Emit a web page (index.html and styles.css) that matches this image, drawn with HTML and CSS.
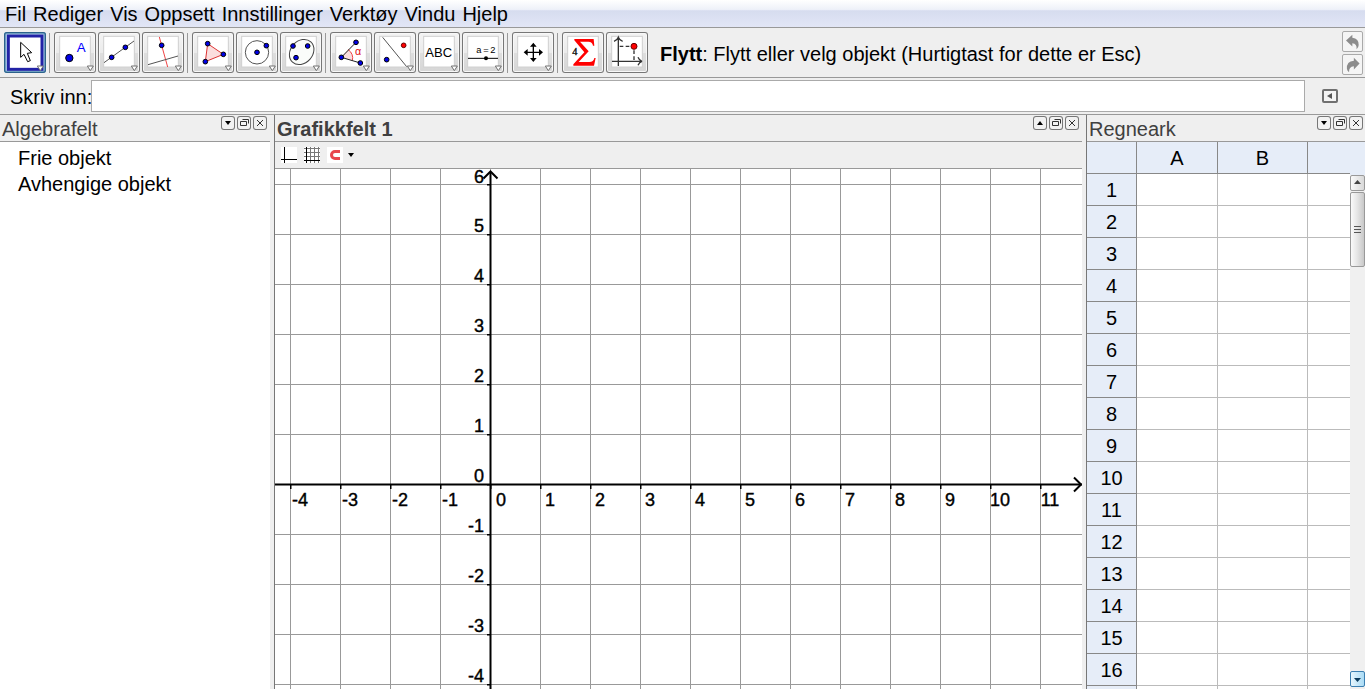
FILE: index.html
```html
<!DOCTYPE html>
<html lang="nn">
<head>
<meta charset="utf-8">
<title>GeoGebra</title>
<link rel="stylesheet" href="styles.css">
</head>
<body>
<svg class="defs" aria-hidden="true">
  <symbol id="tile" viewBox="0 0 126 123">
    <rect x="17" y="13" width="92" height="92" fill="#fff" stroke="#d0d0d0" stroke-width="3"/>
  </symbol>
  <symbol id="more" viewBox="0 0 126 123">
    <path d="M100 102h18l-9 14z" fill="#fff" stroke="#707070" stroke-width="3"/>
  </symbol>
  <symbol id="down" viewBox="0 0 14 14"><path d="M4 5h6L7 9z" fill="#000"/></symbol>
  <symbol id="up" viewBox="0 0 14 14"><path d="M4 9h6L7 5z" fill="#000"/></symbol>
  <symbol id="window" viewBox="0 0 14 14"><path d="M3.500 5.500h6v4h-6zM5.500 3.500h6v4" fill="none" stroke="#333"/></symbol>
  <symbol id="close" viewBox="0 0 14 14"><path d="M4 4l6 6M10 4l-6 6" fill="none" stroke="#333"/></symbol>
</svg>

<nav class="menu" aria-label="Meny">
  <button>Fil</button><button>Rediger</button><button>Vis</button><button>Oppsett</button><button>Innstillinger</button><button>Verktøy</button><button>Vindu</button><button>Hjelp</button>
</nav>

<div class="toolbar">
  <button class="tool selected" aria-label="Flytt" aria-pressed="true"><svg viewBox="0 0 126 123">
    <rect x="13" y="12" width="101" height="100" fill="#fff" stroke="#2222a6" stroke-width="9"/>
    <path d="M50 31v45l10-9 11 22 8-3-9-22 13-2z" fill="#fff" stroke="#000" stroke-width="3"/>
    <use href="#more"/></svg></button>
  <span class="sep"></span>
  <button class="tool" aria-label="Nytt punkt"><svg viewBox="0 0 126 123"><use href="#tile"/>
    <circle class="pt" cx="46" cy="78" r="11"/><text x="68" y="60" font-size="40" fill="#00f">A</text><use href="#more"/></svg></button>
  <button class="tool" aria-label="Linje"><svg viewBox="0 0 126 123"><use href="#tile"/>
    <path class="ln" d="M18 92L108 27"/><circle class="pt" cx="41" cy="76" r="7"/><circle class="pt" cx="82" cy="46" r="7"/><use href="#more"/></svg></button>
  <button class="tool" aria-label="Normal"><svg viewBox="0 0 126 123"><use href="#tile"/>
    <path class="ln red" d="M52 15l25 90"/><path class="ln" d="M18 98l90-26"/><circle class="pt" cx="59" cy="40" r="7"/><use href="#more"/></svg></button>
  <span class="sep"></span>
  <button class="tool" aria-label="Mangekant"><svg viewBox="0 0 126 123"><use href="#tile"/>
    <path d="M47 35l47 32-54 22z" fill="#fbdede" stroke="#d33" stroke-width="3"/><circle class="pt" cx="47" cy="35" r="7"/><circle class="pt" cx="94" cy="67" r="7"/><circle class="pt" cx="40" cy="89" r="7"/><use href="#more"/></svg></button>
  <button class="tool" aria-label="Sirkel"><svg viewBox="0 0 126 123"><use href="#tile"/>
    <circle class="ln" cx="63" cy="61" r="35"/><circle class="pt" cx="63" cy="61" r="7"/><circle class="pt" cx="91" cy="41" r="7"/><use href="#more"/></svg></button>
  <button class="tool" aria-label="Ellipse"><svg viewBox="0 0 126 123"><use href="#tile"/>
    <ellipse cx="65" cy="60" rx="41" ry="33" transform="rotate(-48 65 60)" fill="#fafcfa" stroke="#444" stroke-width="3"/><circle class="pt" cx="39" cy="42" r="7"/><circle class="pt" cx="83" cy="42" r="7"/><circle class="pt" cx="48" cy="77" r="7"/><use href="#more"/></svg></button>
  <span class="sep"></span>
  <button class="tool" aria-label="Vinkel"><svg viewBox="0 0 126 123"><use href="#tile"/>
    <path d="M34 76l20-24q18 14 13 34z" fill="#fbdede"/><path class="ln red" d="M54 52q18 14 13 34"/><path class="ln dark" d="M78 31L34 76l57 17"/>
    <text x="75" y="69" font-size="32" fill="#e01010">α</text><circle class="pt" cx="34" cy="76" r="7"/><circle class="pt" cx="78" cy="31" r="7"/><circle class="pt" cx="91" cy="93" r="7"/><use href="#more"/></svg></button>
  <button class="tool" aria-label="Spegling"><svg viewBox="0 0 126 123"><use href="#tile"/>
    <path class="ln" d="M26 16l72 88"/><circle class="pt hot" cx="89" cy="40" r="7"/><circle class="pt" cx="38" cy="83" r="7"/><use href="#more"/></svg></button>
  <button class="tool" aria-label="Tekst"><svg viewBox="0 0 126 123"><use href="#tile"/>
    <text x="22" y="74" font-size="39">ABC</text><use href="#more"/></svg></button>
  <button class="tool" aria-label="Glider"><svg viewBox="0 0 126 123"><use href="#tile"/>
    <text x="43" y="62" font-size="28">a</text><text x="64" y="62" font-size="28">=</text><text x="85" y="62" font-size="28">2</text>
    <path class="ln black" d="M18 79h90"/><circle cx="72" cy="79" r="6"/><use href="#more"/></svg></button>
  <span class="sep"></span>
  <button class="tool" aria-label="Flytt grafikkfeltet"><svg viewBox="0 0 126 123"><use href="#tile"/>
    <path d="M42 61h44M64 39v44" stroke="#000" stroke-width="4"/><path d="M64 32l10 12H54zM64 90l10-12H54zM35 61l12-10v20zM93 61L81 51v20z"/><use href="#more"/></svg></button>
  <span class="sep"></span>
  <button class="tool" aria-label="Sum"><svg viewBox="0 0 126 123"><use href="#tile"/>
    <path d="M37 21h58l2 20h-4q-2-12-14-12H54l26 29-30 32h32q13 0 15-12h4l-5 23H34v-4l33-36-30-36z" fill="#f00"/><text class="serif" x="31" y="69" font-size="31" stroke="#000">4</text></svg></button>
  <button class="tool" aria-label="Koordinatar"><svg viewBox="0 0 126 123"><use href="#tile"/>
    <path d="M37 102V18M18 88h88M24 28q10-3 13-12 3 9 13 12M96 76q4 10 12 12-8 2-12 12" fill="none" stroke="#333" stroke-width="4"/>
    <path d="M41 43h34M84 55v30" stroke="#333" stroke-width="4" stroke-dasharray="11 7"/><circle class="pt hot" cx="84" cy="43" r="9"/></svg></button>
  <p class="help"><b>Flytt</b>: Flytt eller velg objekt (Hurtigtast for dette er Esc)</p>
  <div class="history">
    <button aria-label="Angre"><svg viewBox="0 0 63 63"><path d="M10 28L31 9v10q22 3 21 24 0 8-7 14 2-18-14-20v11z" fill="#8c8c8c"/></svg></button>
    <button aria-label="Gjer om"><svg viewBox="0 0 63 63"><path d="M55 28L36 9v10Q11 21 13 46q0 6 7 11-1-18 16-20v11z" fill="#8c8c8c"/></svg></button>
  </div>
</div>

<form class="entry">
  <label for="cmd">Skriv inn:</label>
  <input id="cmd" type="text">
  <button type="button" aria-label="Kommandoar"><svg viewBox="0 0 16 14"><rect x="1" y="1" width="14" height="12" rx="1" fill="#f4f4f4" stroke="#707070" stroke-width="2"/><path d="M10 4v6L5 7z" fill="#555"/></svg></button>
</form>

<main class="panels">
  <section class="panel algebra">
    <header><h2>Algebrafelt</h2><div class="ctl">
      <button aria-label="Meny"><svg><use href="#down"/></svg></button><button aria-label="Vindauge"><svg><use href="#window"/></svg></button><button aria-label="Lukk"><svg><use href="#close"/></svg></button></div></header>
    <ul><li>Frie objekt</li><li>Avhengige objekt</li></ul>
  </section>

  <section class="panel graph">
    <header><h2 class="active">Grafikkfelt 1</h2><div class="ctl">
      <button aria-label="Meny"><svg><use href="#up"/></svg></button><button aria-label="Vindauge"><svg><use href="#window"/></svg></button><button aria-label="Lukk"><svg><use href="#close"/></svg></button></div></header>
    <div class="stylebar">
      <button aria-label="Aksar"><svg viewBox="0 0 16 16"><path fill="#fff" d="M0 0h16v16H0z"/><path d="M3.500 0v16M0 12.500h16" stroke="#000"/></svg></button>
      <button aria-label="Rutenett"><svg viewBox="0 0 16 16"><path fill="#fff" d="M0 0h16v16H0z"/><path d="M6.500 0v16M10.500 0v16M14.500 0v16M0 1.500h16M0 5.500h16M0 9.500h16" stroke="#777"/><path d="M2.500 0v16M0 13.500h16" stroke="#000"/></svg></button>
      <button aria-label="Punktfangar"><svg viewBox="0 0 16 16"><path fill="#fff" d="M0 0h16v16H0z"/><path d="M13 4.500H8a3.500 3.500 0 0 0 0 7h5" fill="none" stroke="#e8474d" stroke-width="3"/></svg></button>
      <button class="drop" aria-label="Val for punktfangar"><svg viewBox="0 0 6 16"><path d="M0 6h6L3 10z"/></svg></button>
    </div>
    <div class="plot">
      <svg class="plane" role="img" aria-label="Koordinatsystem">
        <defs><pattern id="grid" width="50" height="50" patternUnits="userSpaceOnUse" x="15" y="15"><path d="M.5 0v50M0 .5h50" stroke="#999"/></pattern>
        <pattern id="tx" width="50" height="6" patternUnits="userSpaceOnUse" x="15" y="315"><path d="M.5 0v5" stroke="#000" stroke-width="2"/></pattern>
        <pattern id="ty" width="6" height="50" patternUnits="userSpaceOnUse" x="212" y="15"><path d="M0 .5h5" stroke="#000" stroke-width="2"/></pattern></defs>
        <rect width="100%" height="100%" fill="url(#grid)"/>
        <rect y="315" width="100%" height="5" fill="url(#tx)"/>
        <rect x="212" width="4" height="100%" fill="url(#ty)"/>
        <path d="M215.500 3v2000" stroke="#000" stroke-width="2"/>
        <path d="M208.500 9.500l7-7 7 7" fill="none" stroke="#000" stroke-width="2"/>
        <line x1="0" y1="315.500" x2="100%" y2="315.500" stroke="#000" stroke-width="2"/>
        <g class="num">
          <text x="25" y="337">-4</text><text x="75" y="337">-3</text><text x="125" y="337">-2</text><text x="175" y="337">-1</text><text x="226" y="337">0</text><text x="275" y="337">1</text><text x="325" y="337">2</text><text x="375" y="337">3</text><text x="425" y="337">4</text><text x="475" y="337">5</text><text x="525" y="337">6</text><text x="575" y="337">7</text><text x="625" y="337">8</text><text x="675" y="337">9</text><text x="725" y="337">10</text><text x="775" y="337">11</text>
        </g>
        <g class="num end">
          <text x="209" y="14">6</text><text x="209" y="63">5</text><text x="209" y="113">4</text><text x="209" y="163">3</text><text x="209" y="213">2</text><text x="209" y="263">1</text><text x="209" y="313">0</text><text x="209" y="363">-1</text><text x="209" y="413">-2</text><text x="209" y="463">-3</text><text x="209" y="513">-4</text>
        </g>
        <svg x="100%" y="308" width="10" height="16" overflow="visible"><path d="M-8 .5l7 7-7 7" fill="none" stroke="#000" stroke-width="2"/></svg>
      </svg>
    </div>
  </section>

  <section class="panel sheet">
    <header><h2>Regneark</h2><div class="ctl">
      <button aria-label="Meny"><svg><use href="#down"/></svg></button><button aria-label="Vindauge"><svg><use href="#window"/></svg></button><button aria-label="Lukk"><svg><use href="#close"/></svg></button></div></header>
    <div class="sheetbody">
      <div class="cells">
        <table>
          <colgroup><col class="c0"><col class="c1"><col class="c2"><col></colgroup>
          <thead><tr><th></th><th scope="col">A</th><th scope="col">B</th><th></th></tr></thead>
          <tbody>
            <tr><th scope="row">1</th><td></td><td></td><td></td></tr>
            <tr><th scope="row">2</th><td></td><td></td><td></td></tr>
            <tr><th scope="row">3</th><td></td><td></td><td></td></tr>
            <tr><th scope="row">4</th><td></td><td></td><td></td></tr>
            <tr><th scope="row">5</th><td></td><td></td><td></td></tr>
            <tr><th scope="row">6</th><td></td><td></td><td></td></tr>
            <tr><th scope="row">7</th><td></td><td></td><td></td></tr>
            <tr><th scope="row">8</th><td></td><td></td><td></td></tr>
            <tr><th scope="row">9</th><td></td><td></td><td></td></tr>
            <tr><th scope="row">10</th><td></td><td></td><td></td></tr>
            <tr><th scope="row">11</th><td></td><td></td><td></td></tr>
            <tr><th scope="row">12</th><td></td><td></td><td></td></tr>
            <tr><th scope="row">13</th><td></td><td></td><td></td></tr>
            <tr><th scope="row">14</th><td></td><td></td><td></td></tr>
            <tr><th scope="row">15</th><td></td><td></td><td></td></tr>
            <tr><th scope="row">16</th><td></td><td></td><td></td></tr>
            <tr><th></th><td></td><td></td><td></td></tr>
          </tbody>
        </table>
      </div>
      <div class="scroll">
        <button aria-label="Rull opp"><svg viewBox="0 0 13 14"><path d="M3 8h7L6.500 4z" fill="#444"/></svg></button>
        <div class="thumb"><i></i><i></i><i></i></div>
        <button class="hot" aria-label="Rull ned"><svg viewBox="0 0 13 14"><path d="M3 6h7l-3.500 4z" fill="#0b3a5c"/></svg></button>
      </div>
    </div>
  </section>
</main>
</body>
</html>
```
FILE: styles.css
```css
* { box-sizing: border-box; }

body {
  margin: 0;
  height: 100vh;
  display: flex;
  flex-direction: column;
  overflow: hidden;
  background: #efefef;
  color: #000;
  font: 20px/26px "Liberation Sans", Arial, sans-serif;
}

button { margin: 0; padding: 0; border: 0; background: none; color: inherit; font: inherit; }
svg { display: block; }
.defs { position: absolute; width: 0; height: 0; }

.menu {
  display: flex;
  gap: 7px;
  height: 28px;
  padding-left: 5px;
  border-bottom: 1px solid #999;
  background: linear-gradient(#fff, #eef1f9 35%, #d6dcef 40%, #e2e6f6);
}

.toolbar {
  display: flex;
  align-items: center;
  gap: 2px;
  height: 50px;
  padding: 0 2px 0 4px;
  border-bottom: 1px solid #999;
}
.tool {
  flex: none;
  width: 42px;
  height: 41px;
  border-radius: 3px;
  background: linear-gradient(#f4f4f4, #ebebeb 50%, #dedede 52%, #d6d6d6);
  box-shadow: inset 0 0 0 1px #777, inset 0 0 0 2px #f8f8f8;
}
.tool svg { width: 42px; height: 41px; }
.tool.selected {
  background: #b8d8ec;
  box-shadow: inset 0 0 0 1px #2c628b, inset 0 0 0 2px #6f9fc0;
}
.tool text { font-family: "Liberation Sans", Arial, sans-serif; }
.tool .serif { font-family: "Liberation Serif", "Times New Roman", serif; }
.pt { fill: #0000e6; stroke: #000; stroke-width: 3; }
.pt.hot { fill: #f00; stroke: #600; }
.ln { fill: none; stroke: #555; stroke-width: 3; }
.ln.red { stroke: #f04444; }
.ln.dark { stroke: #222; }
.ln.black { stroke: #000; }
.sep { flex: none; width: 1px; height: 40px; margin: 0 2px 0 1px; background: #999; }
.help { flex: 1; margin: 2px 0 0 10px; white-space: nowrap; }
.history { display: flex; flex-direction: column; gap: 2px; }
.history button { width: 21px; height: 21px; border: 1px solid #aaa; border-radius: 2px; background: #f5f5f5; }
.history svg { width: 19px; height: 19px; }

.entry {
  display: flex;
  align-items: center;
  height: 37px;
  padding: 0 27px 0 10px;
  border-bottom: 1px solid #999;
}
.entry label { width: 81px; padding-top: 2px; white-space: nowrap; }
.entry input {
  flex: 1;
  min-width: 0;
  height: 32px;
  padding: 0 4px;
  border: 1px solid #aaa;
  background: #fff;
  font: inherit;
}
.entry button { margin-left: 17px; }
.entry svg { width: 16px; height: 14px; }

.panels { flex: 1; min-height: 0; display: flex; gap: 4px; }
.panel { display: flex; flex-direction: column; min-width: 0; min-height: 0; }
.panel header {
  display: flex;
  justify-content: space-between;
  height: 27px;
  padding: 1px 3px 0 2px;
  border-bottom: 1px solid #999;
}
.panel h2 { margin: 0; font-size: 20px; font-weight: normal; line-height: 26px; color: #404040; white-space: nowrap; }
.panel h2.active { font-weight: bold; }
.ctl { display: flex; gap: 2px; }
.ctl button { width: 14px; height: 14px; border-radius: 3px; background: #f2f2f2; box-shadow: inset 0 0 0 1px #777; }
.ctl svg { width: 14px; height: 14px; }

.algebra { width: 270px; background: #fff; }
.algebra header { background: #efefef; }
.algebra ul { margin: 0; padding: 3px 0 0 18px; list-style: none; }

.graph { flex: 1; border-left: 1px solid #777; }
.stylebar { display: flex; align-items: center; gap: 7px; height: 27px; padding-left: 6px; border-bottom: 1px solid #999; }
.stylebar svg { width: 16px; height: 16px; }
.stylebar .drop svg { width: 6px; }
.stylebar .drop { margin-left: -2px; }
.plot { flex: 1; min-height: 0; overflow: hidden; background: #fff; }
.plane { width: 100%; height: 100%; }
.num text { font-size: 18px; text-anchor: middle; stroke: #000; stroke-width: 0.4px; }
.num.end text { text-anchor: end; }

.sheet { width: 279px; border-left: 1px solid #777; }
.sheet header { padding-right: 2px; }
.sheetbody { flex: 1; min-height: 0; display: flex; background: #fff; }
.cells { flex: 1; min-width: 0; overflow: hidden; }
.cells table { width: 100%; table-layout: fixed; border-collapse: separate; border-spacing: 0; }
.c0 { width: 50px; }
.c1 { width: 81px; }
.c2 { width: 90px; }
.cells th, .cells td { height: 32px; padding: 0; border: 0 solid #bbb; border-width: 0 1px 1px 0; }
.cells th { border-color: #888; background: #e6edf8; font-weight: normal; }
.cells th:last-child, .cells td:last-child { border-right: 0; }

.scroll { display: flex; flex-direction: column; width: 15px; padding-bottom: 2px; border-top: 33px solid #e6edf8; background: #f0f0f0; }
.scroll button { width: 15px; height: 16px; border: 1px solid #999; border-radius: 2px; background: linear-gradient(90deg, #fafafa, #d8d8d8); }
.scroll svg { width: 13px; height: 14px; }
.scroll .hot { margin-top: auto; border-color: #3c7fb1; background: linear-gradient(90deg, #e8f6fd, #a9dbf5); }
.thumb {
  display: flex;
  flex-direction: column;
  justify-content: center;
  align-items: center;
  gap: 2px;
  height: 75px;
  margin-top: 1px;
  border: 1px solid #999;
  border-radius: 2px;
  background: linear-gradient(90deg, #fafafa, #e4e4e4 50%, #c8c8c8);
}
.thumb i { width: 7px; height: 1px; background: #555; }
```
